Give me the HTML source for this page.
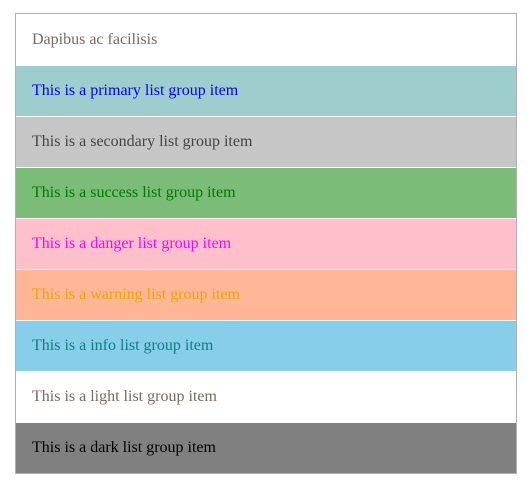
<!DOCTYPE html>
<html><head><style>
body{margin:0;background:#fff;font-family:"Liberation Serif",serif;font-size:16px}
.g{position:absolute;left:15px;top:13px;width:500px;border:1px solid #b0b0b0}
.i{height:50px;line-height:50px;padding-left:16px;border-top:1px solid #fff;box-sizing:content-box}
.i:first-child{border-top:0;height:51px;line-height:51px}
</style></head><body>
<div class="g">
<div class="i" style="color:#7a6a60;background:#fff">Dapibus ac facilisis</div>
<div class="i" style="background:#9dcdcc;color:#0000ff">This is a primary list group item</div>
<div class="i" style="background:#c6c6c6;color:#444">This is a secondary list group item</div>
<div class="i" style="background:#7abc78;color:#007a00">This is a success list group item</div>
<div class="i" style="background:#ffc0cb;color:#ff00ff">This is a danger list group item</div>
<div class="i" style="background:#ffb697;color:#e8a800">This is a warning list group item</div>
<div class="i" style="background:#87ceeb;color:#127e7e">This is a info list group item</div>
<div class="i" style="background:#fff;color:#7a6a60">This is a light list group item</div>
<div class="i" style="background:#808080;color:#000">This is a dark list group item</div>
</div>
</body></html>
